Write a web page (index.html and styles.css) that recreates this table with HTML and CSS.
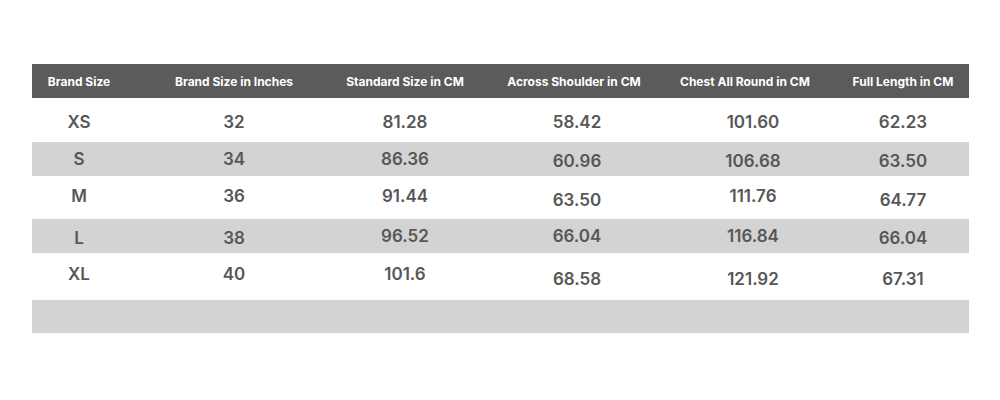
FILE: index.html
```html
<!DOCTYPE html>
<html>
<head>
<meta charset="utf-8">
<link rel="stylesheet" href="styles.css">
</head>
<body>
<div class="page">
  <div class="table">
    <div class="row head">
      <div class="c c1">Brand Size</div>
      <div class="c c2">Brand Size in Inches</div>
      <div class="c c3">Standard Size in CM</div>
      <div class="c c4">Across Shoulder in CM</div>
      <div class="c c5">Chest All Round in CM</div>
      <div class="c c6">Full Length in CM</div>
    </div>
    <div class="row body r-xs">
      <div class="c c1">XS</div>
      <div class="c c2">32</div>
      <div class="c c3">81.28</div>
      <div class="c c4">58.42</div>
      <div class="c c5">101.60</div>
      <div class="c c6">62.23</div>
    </div>
    <div class="row body grey r-s">
      <div class="c c1">S</div>
      <div class="c c2">34</div>
      <div class="c c3">86.36</div>
      <div class="c c4 low">60.96</div>
      <div class="c c5 low">106.68</div>
      <div class="c c6 low">63.50</div>
    </div>
    <div class="row body r-m">
      <div class="c c1">M</div>
      <div class="c c2">36</div>
      <div class="c c3">91.44</div>
      <div class="c c4 low">63.50</div>
      <div class="c c5">111.76</div>
      <div class="c c6 low">64.77</div>
    </div>
    <div class="row body grey r-l">
      <div class="c c1 low">L</div>
      <div class="c c2 low">38</div>
      <div class="c c3">96.52</div>
      <div class="c c4">66.04</div>
      <div class="c c5">116.84</div>
      <div class="c c6 low">66.04</div>
    </div>
    <div class="row body r-xl">
      <div class="c c1">XL</div>
      <div class="c c2">40</div>
      <div class="c c3">101.6</div>
      <div class="c c4 low">68.58</div>
      <div class="c c5 low">121.92</div>
      <div class="c c6 low">67.31</div>
    </div>
    <div class="row grey r-empty"></div>
  </div>
</div>
</body>
</html>
```
FILE: styles.css
```css
html, body {
  margin: 0;
  padding: 0;
  background: #ffffff;
}
.page {
  width: 1000px;
  height: 400px;
  padding: 64px 31px 0 32px;
  box-sizing: border-box;
  font-family: Inter, "Liberation Sans", sans-serif;
}
.table {
  display: flex;
  flex-direction: column;
}
.row {
  display: grid;
  grid-template-columns: 94px 216px 126px 212px 126px 163px;
  align-items: center;
  color: #575757;
  font-size: 17px;
  font-weight: 600;
}
.c {
  text-align: center;
  white-space: nowrap;
}
.c6 {
  padding-left: 31px;
}
.body .c4 {
  padding-left: 6px;
}
.body .c5 {
  padding-left: 20px;
}
.head {
  background: #5b5b5b;
  color: #ffffff;
  font-size: 12px;
  font-weight: 700;
  height: 34px;
}
.grey {
  background: #d3d3d3;
}
.r-xs { height: 44px; padding-top: 4px; box-sizing: border-box; }
.r-s { height: 34px; }
.r-m { height: 43px; }
.r-l { height: 34px; }
.r-xl { height: 47px; }
.r-empty { height: 33px; }
.low {
  position: relative;
  top: 2px;
}
.r-m .c1, .r-m .c2, .r-m .c3, .r-m .c5 { position: relative; top: -2px; }
.r-xl .c1, .r-xl .c2, .r-xl .c3 { position: relative; top: -3px; }
```
